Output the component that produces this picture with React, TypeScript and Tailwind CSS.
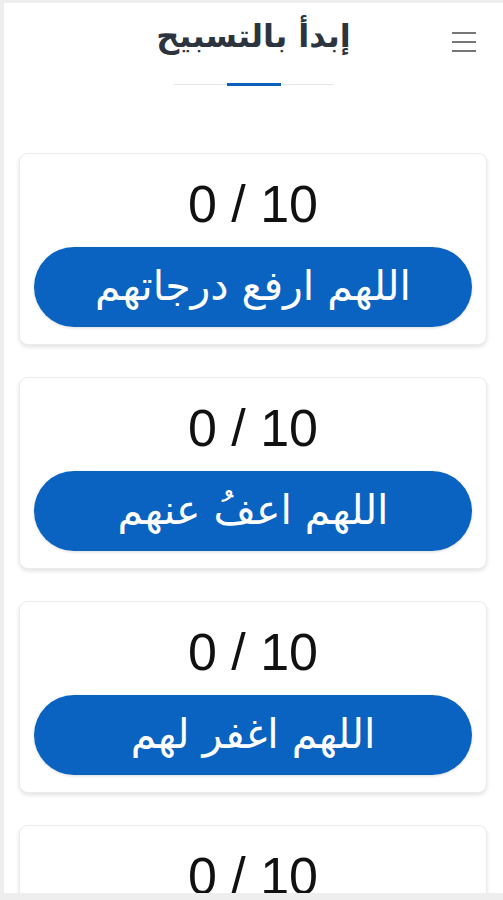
import React from "react";

const items = ["اللهم ارفع درجاتهم", "اللهم اعفُ عنهم", "اللهم اغفر لهم", "اللهم ارحمهم"];

const Card = ({ label }: { label: string }) => {
  return (
    <div className="rounded-[9px] border border-[#ececec] bg-white pt-[20px] pb-[17px] px-[14px] shadow-[0_2px_4px_rgba(0,0,0,0.12)]">
      <div className="text-center text-[52px] leading-[60px] text-[#111]" style={{ fontFamily: "'Liberation Sans', Arial, sans-serif" }} dir="ltr">
        0 / 10
      </div>
      <button className="mt-[13px] flex h-[80px] w-full items-center justify-center rounded-full bg-[#0b63c1] text-[41px] text-white shadow-[0_1px_3px_rgba(0,0,0,0.15)]">
        {label}
      </button>
    </div>
  );
};

export default function App() {
  return (
    <div className="h-[900px] overflow-hidden bg-[#eeeeee] pt-[3px] pl-[4px]" style={{ fontFamily: "'DejaVu Sans', 'Noto Sans', sans-serif" }}>
      <div className="h-[890px] overflow-hidden bg-white" dir="rtl">
        <div className="relative flex h-[93px] flex-col items-center">
          <button className="absolute right-[27px] top-[29px] flex w-[24px] flex-col gap-[7px]">
            <span className="block h-[2px] w-full bg-[#777]" />
            <span className="block h-[2px] w-full bg-[#777]" />
            <span className="block h-[2px] w-full bg-[#777]" />
          </button>
          <h1 className="mt-[8px] text-[32px] font-bold leading-[50px] text-[#2c3440]">إبدأ بالتسبيح</h1>
          <div className="mt-[22px] flex h-[3px] w-[160px] items-center justify-center bg-[linear-gradient(#e6e6e6,#e6e6e6)] bg-[length:100%_1px] bg-center bg-no-repeat">
            <span className="block h-[3px] w-[54px] bg-[#0b5fbd]" />
          </div>
        </div>
        <div className="ml-[15px] mr-[16px] mt-[57px] flex flex-col gap-[32px]">
          {items.map((t, i) => (
            <Card key={i} label={t} />
          ))}
        </div>
      </div>
    </div>
  );
}
